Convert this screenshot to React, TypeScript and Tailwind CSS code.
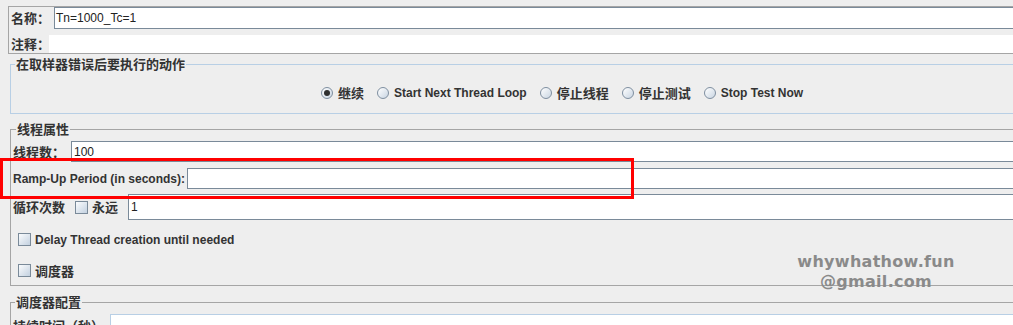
const cjk = "font-['Noto_Sans_CJK_SC',sans-serif] font-bold text-[13px] leading-[14px] text-[#333333] whitespace-nowrap";
const latin = "font-['Liberation_Sans',Arial,sans-serif] font-bold text-[12px] leading-[14px] text-[#333333] whitespace-nowrap";
const field = "h-full flex-1 border border-r-0 border-[#7a8a99] bg-white";

const Radio = ({ checked }: { checked?: boolean }) => (
  <span className="flex h-[12px] w-[12px] shrink-0 items-center justify-center rounded-full border border-[#7f8fa0] bg-gradient-to-br from-white to-[#c9d5e2]">
    {checked && <span className="h-[6px] w-[6px] rounded-full bg-[#2f2f2f]" />}
  </span>
);

const Check = () => (
  <span className="h-[13px] w-[13px] shrink-0 border border-[#7a8a99] bg-gradient-to-br from-[#fbfcfd] to-[#c3d1e0]" />
);

const actions = [
  { label: "继续", cn: true, checked: true },
  { label: "Start Next Thread Loop", cn: false },
  { label: "停止线程", cn: true },
  { label: "停止测试", cn: true },
  { label: "Stop Test Now", cn: false },
];

export default function App() {
  return (
    <div className="relative h-[325px] w-[1013px] overflow-hidden bg-[#eeeeee]">
      {/* name / comment */}
      <div className="ml-[8px] mt-[6px] border border-r-0 border-[#a5a5a5] pl-[1px]">
        <div className="flex h-[22px] items-center">
          <span className={`w-[44px] shrink-0 pl-[1px] ${cjk}`}>名称：</span>
          <div className={`${field} flex items-center pl-[1px] font-['Liberation_Sans',Arial,sans-serif] text-[12px] text-[#222222]`}>
            Tn=1000_Tc=1
          </div>
        </div>
        <div className="mt-[6px] flex h-[18px] items-center">
          <span className={`w-[39px] shrink-0 pl-[1px] ${cjk}`}>注释：</span>
          <div className="h-full flex-1 bg-white" />
        </div>
      </div>

      {/* on sampler error */}
      <fieldset className="ml-[10px] mt-[3px] border border-r-0 border-[#b8cfe5]">
        <legend className={`ml-[4px] px-[1px] ${cjk}`}>在取样器错误后要执行的动作</legend>
        <div className="flex h-[42px] items-center pl-[310px] pt-[2px]">
          {actions.map((a) => (
            <div key={a.label} className="mr-[13px] flex items-center gap-[5px]">
              <Radio checked={a.checked} />
              <span className={a.cn ? cjk : latin}>{a.label}</span>
            </div>
          ))}
        </div>
      </fieldset>

      {/* thread properties */}
      <fieldset className="ml-[10px] mt-[8px] border border-r-0 border-[#a5a5a5] pb-[8px]">
        <legend className={`ml-[5px] px-[1px] ${cjk}`}>线程属性</legend>
        <div className="mt-[5px] flex h-[21px] items-center">
          <span className={`w-[60px] shrink-0 pl-[2px] ${cjk}`}>线程数：</span>
          <div className={`${field} flex items-center pl-[2px] font-['Liberation_Sans',Arial,sans-serif] text-[12px] text-[#222222]`}>
            100
          </div>
        </div>
        <div className="mt-[6px] flex h-[21px] items-center">
          <span className={`w-[176px] shrink-0 pl-[2px] ${latin}`}>Ramp-Up Period (in seconds):</span>
          <div className={field} />
        </div>
        <div className="mt-[5px] flex h-[26px] items-center">
          <span className={`w-[64px] shrink-0 pl-[2px] ${cjk}`}>循环次数</span>
          <Check />
          <span className={`ml-[4px] w-[36px] shrink-0 ${cjk}`}>永远</span>
          <div className={`${field} flex items-center pl-[2px] font-['Liberation_Sans',Arial,sans-serif] text-[12px] text-[#222222]`}>
            1
          </div>
        </div>
        <div className="mt-[13px] flex h-[13px] items-center gap-[4px] pl-[7px]">
          <Check />
          <span className={latin}>Delay Thread creation until needed</span>
        </div>
        <div className="mt-[18px] flex h-[13px] items-center gap-[4px] pl-[7px]">
          <Check />
          <span className={cjk}>调度器</span>
        </div>
      </fieldset>

      {/* scheduler config */}
      <fieldset className="ml-[10px] mt-[9px] border border-r-0 border-[#a5a5a5]">
        <legend className={`ml-[4px] px-[1px] ${cjk}`}>调度器配置</legend>
        <div className="mt-[5px] flex h-[22px] items-start">
          <span className={`w-[99px] shrink-0 pl-[2px] pt-[5px] ${cjk}`}>持续时间（秒）</span>
          <div className="h-full flex-1 border border-r-0 border-[#b8cfe5] bg-white" />
        </div>
      </fieldset>

      {/* highlight box */}
      <div className="absolute left-0 top-[158px] h-[41px] w-[634px] border-[3px] border-[#ff0000]" />

      {/* watermark */}
      <div className="absolute left-[786px] top-[252px] w-[180px] text-center font-['DejaVu_Sans',sans-serif] text-[16px] font-bold leading-[20px] tracking-[0.3px] text-[#8a8a8a]">
        <div>whywhathow.fun</div>
        <div>@gmail.com</div>
      </div>
    </div>
  );
}
